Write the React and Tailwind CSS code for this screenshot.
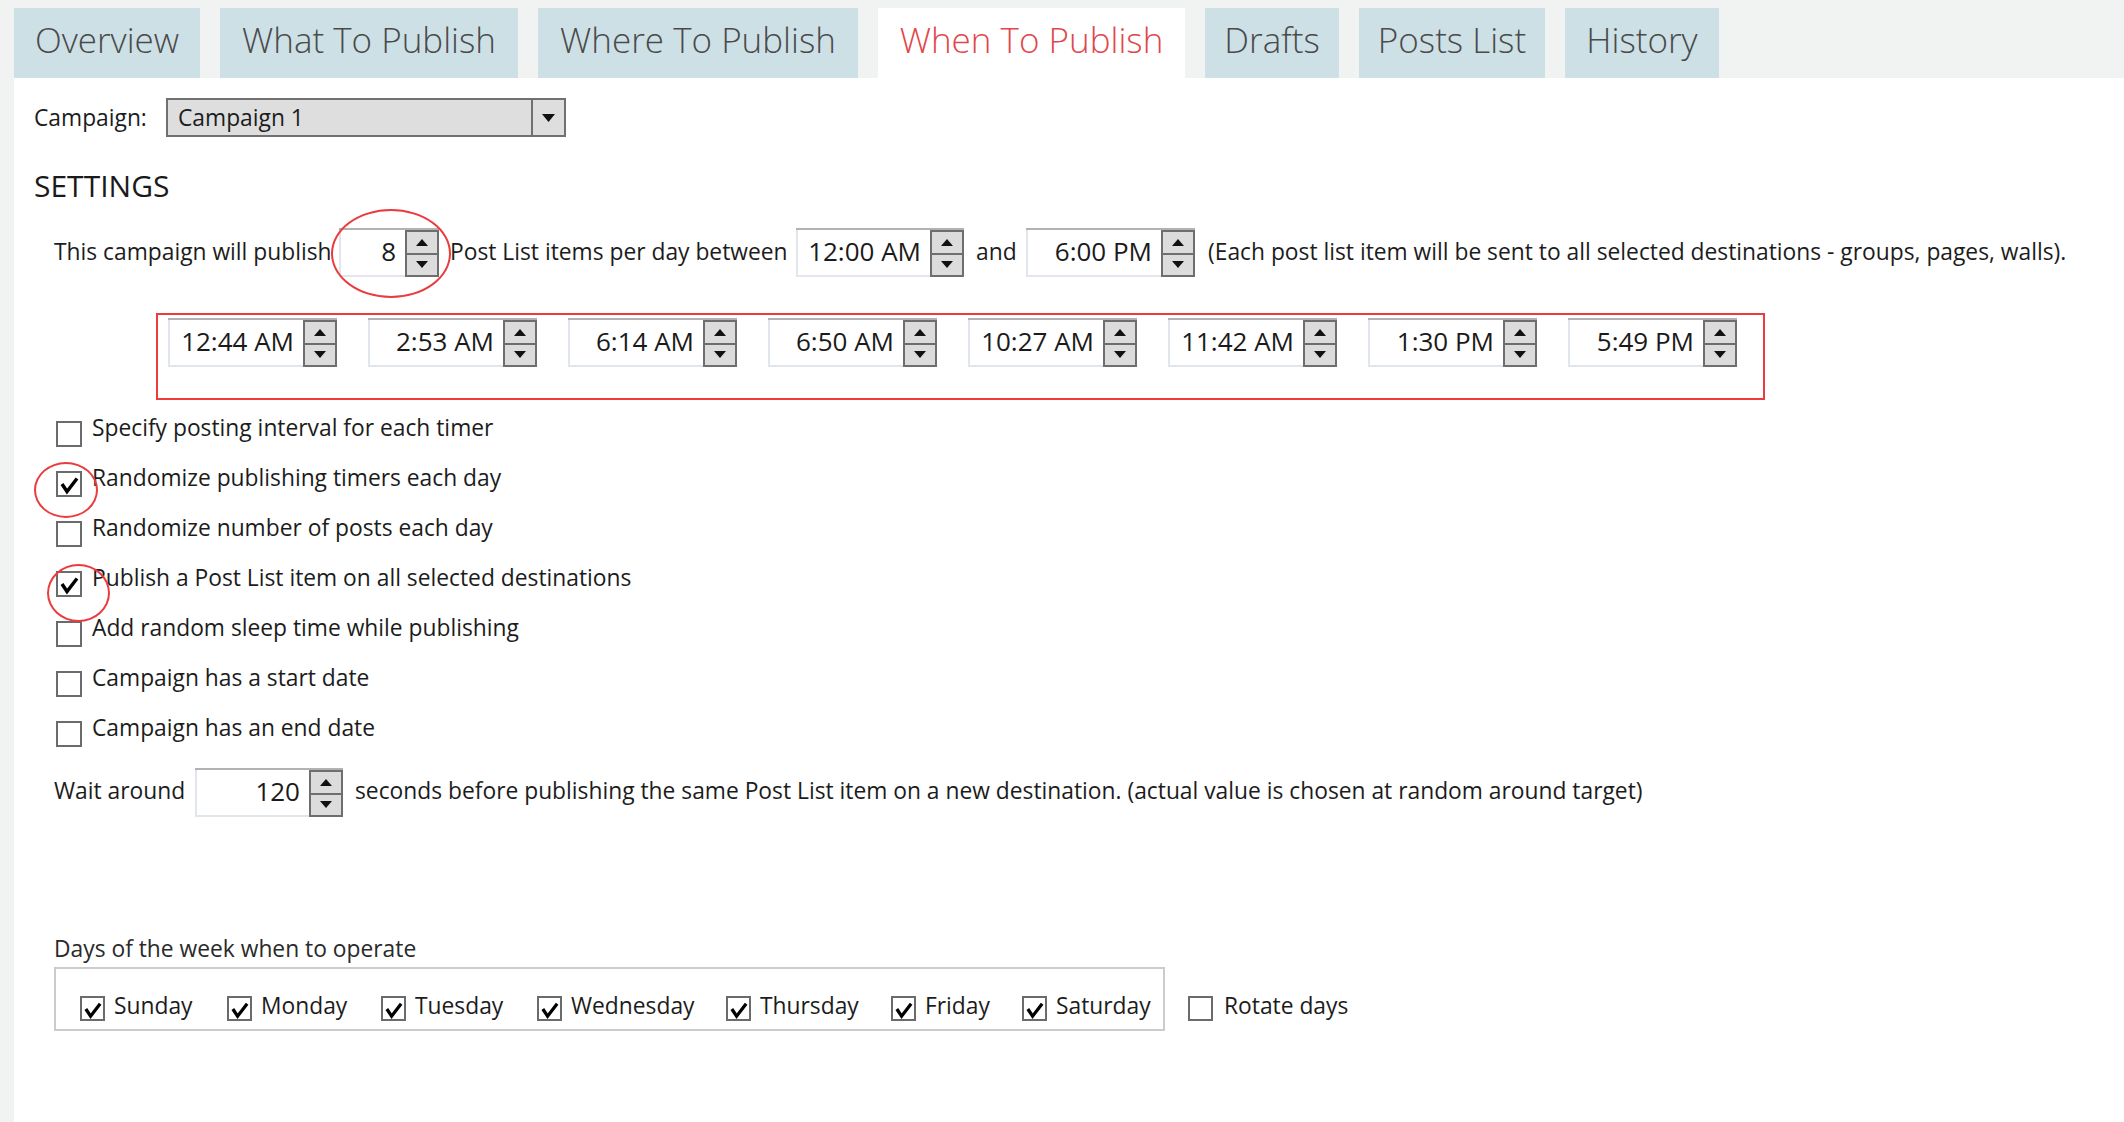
import React from "react";

function Tri({ up }) {
  return (
    <svg width="12" height="7" viewBox="0 0 12 7">
      <polygon points={up ? "6,0 12,7 0,7" : "0,0 12,0 6,7"} fill="#111" />
    </svg>
  );
}

function Spinner({ w, value }) {
  return (
    <div className={`flex h-[49px] border-t-2 border-t-[#b2b2b2] shrink-0 ${w}`}>
      <div className="flex-1 flex items-center justify-end pr-[9px] pb-[4px] bg-white border-l-2 border-b-2 border-[#e1e6ec] text-[26px] leading-none text-[#1a1a1a] whitespace-nowrap">
        {value}
      </div>
      <div className="w-[34px] flex flex-col gap-[2px] border-2 border-[#6e6e6e] bg-[#6e6e6e]">
        <div className="flex-1 bg-[#dcdcdc] flex items-center justify-center">
          <Tri up />
        </div>
        <div className="flex-1 bg-[#dcdcdc] flex items-center justify-center">
          <Tri />
        </div>
      </div>
    </div>
  );
}

function Box({ checked, small }) {
  return (
    <div
      className={`${small ? "w-[25px] h-[25px]" : "w-[26px] h-[26px]"} border-2 border-[#6b6b6b] bg-white flex items-center justify-center shrink-0`}
    >
      {checked && (
        <svg width="22" height="22" viewBox="0 0 22 22">
          <path d="M4 11 L9 18.5 L19 5.5" stroke="#000" strokeWidth="3.4" fill="none" strokeLinejoin="miter" />
        </svg>
      )}
    </div>
  );
}

const tabs = [
  { t: "Overview", w: "w-[186px]" },
  { t: "What To Publish", w: "w-[298px]" },
  { t: "Where To Publish", w: "w-[320px]" },
  { t: "When To Publish", w: "w-[307px]", active: true },
  { t: "Drafts", w: "w-[134px]" },
  { t: "Posts List", w: "w-[186px]" },
  { t: "History", w: "w-[154px]" },
];

const options = [
  { t: "Specify posting interval for each timer", c: false },
  { t: "Randomize publishing timers each day", c: true },
  { t: "Randomize number of posts each day", c: false },
  { t: "Publish a Post List item on all selected destinations", c: true },
  { t: "Add random sleep time while publishing", c: false },
  { t: "Campaign has a start date", c: false },
  { t: "Campaign has an end date", c: false },
];

const times = ["12:44 AM", "2:53 AM", "6:14 AM", "6:50 AM", "10:27 AM", "11:42 AM", "1:30 PM", "5:49 PM"];

const days = [
  { t: "Sunday", w: "w-[147px]" },
  { t: "Monday", w: "w-[154px]" },
  { t: "Tuesday", w: "w-[156px]" },
  { t: "Wednesday", w: "w-[189px]" },
  { t: "Thursday", w: "w-[165px]" },
  { t: "Friday", w: "w-[131px]" },
  { t: "Saturday", w: "w-[136px]" },
];

export default function App() {
  return (
    <div className="w-[2124px] h-[1122px] bg-[#f1f3f3] flex flex-col font-['Open_Sans',sans-serif] text-[22.8px] text-[#1c1c1c] overflow-hidden">
      <div className="h-[78px] shrink-0 flex items-end pl-[14px] gap-[20px]">
        {tabs.map((tab) => (
          <div
            key={tab.t}
            className={`${tab.w} h-[70px] pb-[5px] flex items-center justify-center text-[35px] font-light whitespace-nowrap ${
              tab.active ? "bg-white text-[#e2464b]" : "bg-[#cde0e6] text-[#4a4a4a]"
            }`}
          >
            {tab.t}
          </div>
        ))}
      </div>

      <div className="flex-1 ml-[14px] bg-white relative flex flex-col">
        <div className="flex items-center mt-[20px] ml-[20px] h-[39px]">
          <span className="w-[132px] whitespace-nowrap pt-[1px]">Campaign:</span>
          <div className="w-[400px] h-[39px] border-2 border-[#707070] bg-[#dedede] flex">
            <div className="flex-1 flex items-center pl-[10px] pt-[1px] whitespace-nowrap">Campaign 1</div>
            <div className="w-[33px] border-l-2 border-[#707070] flex items-center justify-center">
              <svg width="13" height="8" viewBox="0 0 13 8">
                <polygon points="0,0 13,0 6.5,8" fill="#111" />
              </svg>
            </div>
          </div>
        </div>

        <div className="mt-[31px] ml-[20px] h-[40px] pb-[4px] flex items-center text-[30px] leading-none text-[#1a1a1a]">SETTINGS</div>

        <div className="flex items-center h-[49px] mt-[20px] ml-[40px] whitespace-nowrap">
          <span className="w-[285px] pb-[1px]">This campaign will publish</span>
          <Spinner w="w-[100px]" value="8" />
          <span className="w-[357px] pl-[11px] pb-[1px]">Post List items per day between</span>
          <Spinner w="w-[168px]" value="12:00 AM" />
          <span className="w-[62px] pl-[12px] pb-[1px]">and</span>
          <Spinner w="w-[169px]" value="6:00 PM" />
          <span className="pl-[13px] pb-[1px]">(Each post list item will be sent to all selected destinations - groups, pages, walls).</span>
        </div>

        <div className="ml-[142px] mt-[36px] w-[1609px] h-[87px] border-2 border-[#ee3a3a] pt-[3px] pl-[10px] flex items-start gap-[31px]">
          {times.map((t) => (
            <Spinner key={t} w="w-[169px]" value={t} />
          ))}
        </div>

        <div className="ml-[42px] mt-[21px] flex flex-col gap-[24px]">
          {options.map((o) => (
            <div key={o.t} className="flex items-center h-[26px] gap-[10px]">
              <Box checked={o.c} />
              <span className="whitespace-nowrap pb-[12px]">{o.t}</span>
            </div>
          ))}
        </div>

        <div className="flex items-center h-[49px] mt-[21px] ml-[40px] whitespace-nowrap">
          <span className="w-[141px] pb-[2px]">Wait around</span>
          <Spinner w="w-[148px]" value="120" />
          <span className="pl-[12px] pb-[2px]">seconds before publishing the same Post List item on a new destination. (actual value is chosen at random around target)</span>
        </div>

        <div className="ml-[40px] mt-[119px] h-[30px] pb-[4px] flex items-center whitespace-nowrap text-[#2a2a2a]">Days of the week when to operate</div>

        <div className="ml-[40px] mt-[1px] flex items-start">
          <div className="w-[1111px] h-[64px] border-2 border-[#cccccc] pt-[27px] pl-[24px] flex items-start">
            {days.map((d) => (
              <div key={d.t} className={`${d.w} flex items-center gap-[9px] h-[25px]`}>
                <Box checked small />
                <span className="whitespace-nowrap pb-[5px]">{d.t}</span>
              </div>
            ))}
          </div>
          <div className="ml-[23px] mt-[29px] flex items-center gap-[11px] h-[25px]">
            <Box small />
            <span className="whitespace-nowrap pb-[5px]">Rotate days</span>
          </div>
        </div>

        <div className="absolute left-[317px] top-[131px] w-[120px] h-[89px] border-2 border-[#ea3c3f] rounded-[50%]" />
        <div className="absolute left-[20px] top-[384px] w-[64px] h-[56px] border-2 border-[#ea3c3f] rounded-[50%]" />
        <div className="absolute left-[33px] top-[486px] w-[63px] h-[58px] border-2 border-[#ea3c3f] rounded-[50%]" />
      </div>
    </div>
  );
}
